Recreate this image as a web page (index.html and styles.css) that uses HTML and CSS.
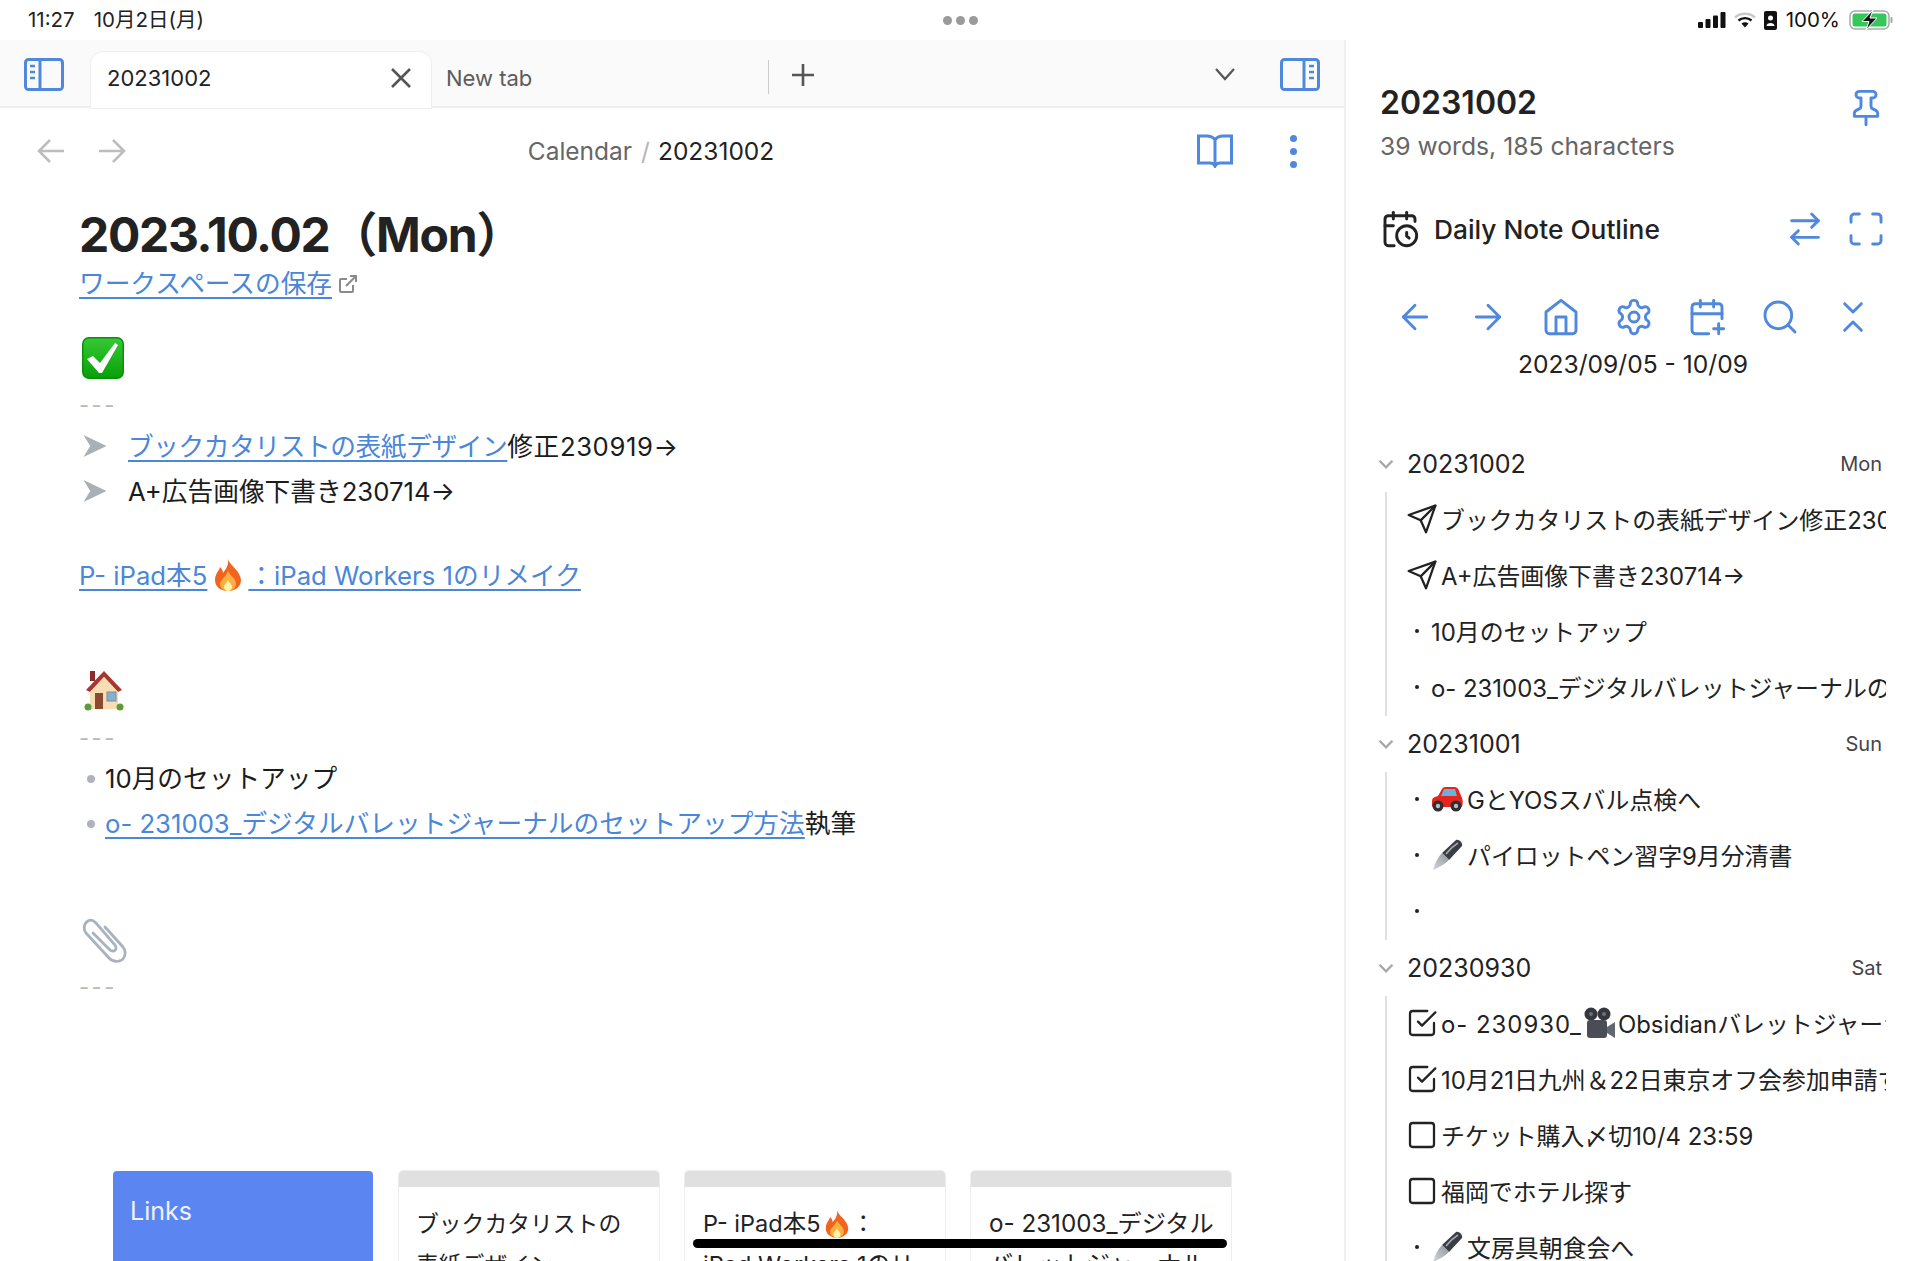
FILE: index.html

```html
<!DOCTYPE html>
<html>
  <head>
    <meta charset="utf-8" />
    <title>20231002</title>
    <link rel="stylesheet" href="styles.css">
  </head>
  <body>
    <!-- SHARED ICONS -->
    <svg class="defs" width="0" height="0">
      <defs>
        <linearGradient id="gCheck" x1="0" y1="0" x2="0" y2="1"><stop offset="0" stop-color="#35c935"/><stop offset="1" stop-color="#08a008"/></linearGradient>
        <linearGradient id="gNib" x1="0" y1="1" x2="1" y2="0"><stop offset="0" stop-color="#d5d8dd"/><stop offset="1" stop-color="#8e939b"/></linearGradient>
      </defs>
      <symbol id="iSend" viewBox="0 0 24 24"><path d="m22 2-7 20-4-9-9-4Z"/><path d="M22 2 11 13"/></symbol>
      <symbol id="iChecked" viewBox="0 0 24 24"><path d="m9 11 3 3L22 4"/><path d="M21 12v7a2 2 0 0 1-2 2H5a2 2 0 0 1-2-2V5a2 2 0 0 1 2-2h11"/></symbol>
      <symbol id="iBox" viewBox="0 0 24 24"><rect x="3" y="3" width="18" height="18" rx="2"/></symbol>
      <symbol id="iChevron" viewBox="0 0 24 24"><path d="m6 9 6 6 6-6"/></symbol>
      <symbol id="iPen" viewBox="0 0 32 32">
        <path d="M25 1C28 0 32 4 31 7L18 21 11 14Z" fill="#3a3d44"/>
        <path d="M27 4C22 7 18 11 15 15" fill="none" stroke="#a4a8af" stroke-width="1.5"/>
        <path d="M11 14 18 21C13 26 8 28 2 31 4 25 6 19 11 14Z" fill="url(#gNib)"/>
      </symbol>
      <symbol id="iMarker" viewBox="0 0 24 24"><path d="M0 0 24 11.5 0 23 7 11.5Z" fill="#abafb6"/></symbol>
    </svg>

    <!-- STATUS BAR -->
    <div class="statusBar">
      <div class="statusTime"><span>11:27</span><span>10月2日(月)</span></div>
      <div class="statusDots"><i></i><i></i><i></i></div>
      <div class="statusIcons">
        <svg width="28" height="16" viewBox="0 0 28 16"><rect x="0" y="10" width="5" height="6" rx="1"/><rect x="7.5" y="7" width="5" height="9" rx="1"/><rect x="15" y="3.5" width="5" height="12.5" rx="1"/><rect x="22.5" y="0" width="5" height="16" rx="1"/></svg>
        <svg class="wifiIcon" width="22" height="16" viewBox="0 0 22 16"><path d="M1 5.5C6.5 .5 15.5 .5 21 5.5" fill="none" stroke="#c9c9c9" stroke-width="2.4"/><path d="M4.5 8.5C8 5.3 14 5.3 17.5 8.5" fill="none" stroke="#111" stroke-width="2.4"/><path d="M7.5 11.5 11 15.5 14.5 11.5C12.5 9.8 9.5 9.8 7.5 11.5Z" fill="#111"/></svg>
        <svg class="lockIcon" width="13" height="19" viewBox="0 0 13 19"><rect x="0" y="0" width="13" height="19" rx="2" fill="#111"/><circle cx="6.5" cy="7" r="2.5" fill="#fff"/><path d="M2.5 15C2.5 11 10.5 11 10.5 15Z" fill="#fff"/></svg>
        <span class="statusPct">100%</span>
        <svg width="44" height="20" viewBox="0 0 44 20"><rect x="1" y="1" width="39" height="18" rx="5" fill="none" stroke="#a9a9a9" stroke-width="1.5"/><rect x="3.5" y="3.5" width="34" height="13" rx="2.5" fill="#34c759"/><rect x="41.5" y="7" width="2" height="6" rx="1" fill="#a9a9a9"/><path d="M24 0 13 11.5h7L17 20l11-12h-7Z" fill="#111" stroke="#fff" stroke-width="1"/></svg>
      </div>
    </div>

    <div class="app">
      <!-- MAIN PANE -->
      <div class="mainPane">
        <div class="tabBar">
          <svg class="sideToggle" width="40" height="33" viewBox="0 0 40 33"><rect x="1.5" y="1.5" width="37" height="30" rx="3"/><path d="M16 1.5v30"/><path class="thin" d="M6 8h5M6 14h5M6 20h5"/></svg>
          <div class="tab tabActive">
            <span>20231002</span>
            <svg class="closeIcon" width="24" height="24" viewBox="0 0 24 24"><path d="M3 3 21 21M21 3 3 21"/></svg>
          </div>
          <div class="tab">
            <span>New tab</span>
          </div>
          <div class="tabDivider"></div>
          <svg class="plusIcon" width="26" height="26" viewBox="0 0 26 26"><path d="M13 2v22M2 13h22"/></svg>
          <svg class="tabMenu" width="24" height="24" viewBox="0 0 24 24"><path d="m3 7 9 10 9-10"/></svg>
          <svg class="sideToggle sideRight" width="40" height="33" viewBox="0 0 40 33"><rect x="1.5" y="1.5" width="37" height="30" rx="3"/><path d="M24 1.5v30"/><path class="thin" d="M29 8h5M29 14h5M29 20h5"/></svg>
        </div>

        <div class="viewHeader">
          <div class="viewNav">
            <svg class="navArrow" width="28" height="26" viewBox="0 0 28 26"><path d="M13 2 2 13l11 11M2 13h25"/></svg>
            <svg class="navArrow" width="28" height="26" viewBox="0 0 28 26"><path d="m15 2 11 11-11 11M26 13H1"/></svg>
          </div>
          <div class="crumbs"><span class="crumbParent">Calendar</span><span class="crumbSep">/</span><span>20231002</span></div>
          <div class="viewActions">
            <svg class="bookIcon" width="36" height="34" viewBox="0 0 36 34"><path d="M18 6C16 3 13 2 10 2H1.5v27H13c2.5 0 4 1 5 3 1-2 2.5-3 5-3h11.5V2H26c-3 0-6 1-8 4Zm0 0v25"/></svg>
            <div class="moreDots"><i></i><i></i><i></i></div>
          </div>
        </div>

        <div class="noteBody">
          <h1 class="noteTitle">2023.10.02（Mon）</h1>
          <div class="linkLine">
            <a class="noteLink">ワークスペースの保存</a>
            <svg class="extIcon" width="20" height="20" viewBox="0 0 20 20"><path d="M15 11v6a1 1 0 0 1-1 1H3a1 1 0 0 1-1-1V6a1 1 0 0 1 1-1h6M12 2h6v6M18 2 8 12"/></svg>
          </div>

          <div class="emojiLine checkLine">
            <svg width="44" height="44" viewBox="0 0 44 44"><rect x="1" y="1" width="42" height="42" rx="7" fill="#0b8f0b"/><rect x="2.5" y="2.5" width="39" height="39" rx="5.5" fill="url(#gCheck)"/><path d="M6 23 12 20 19 27 34 7 37 9 21 37 18 37Z" fill="#fff"/></svg>
          </div>
          <div class="dashes">---</div>
          <div class="listRow"><svg class="marker" width="24" height="23"><use href="#iMarker"/></svg><span><a class="noteLink tightLink">ブックカタリストの表紙デザイン</a><span class="wideText">修正230919→</span></span></div>
          <div class="listRow"><svg class="marker" width="24" height="23"><use href="#iMarker"/></svg><span>A+広告画像下書き230714→</span></div>

          <div class="projectLine"><a class="noteLink">P- iPad本5<svg class="fire" width="30" height="32" viewBox="0 0 30 32"><path d="M15 0C17 7 27 11 28 21 28 28 22 32 15 32 8 32 2 28 2 21 2 15 6 12 7 8 9 10 10 12 10 14 13 10 16 6 15 0Z" fill="#f0641e"/><path d="M15 12C17 17 23 19 23 25 23 29 19 32 15 32 11 32 7 29 7 25 7 21 13 18 15 12Z" fill="#fbb040"/><path d="M15 21C16 24 19 25 19 28 19 30 17 32 15 32 13 32 11 30 11 28 11 25 14 24 15 21Z" fill="#fff3b0"/></svg>：iPad Workers 1のリメイク</a></div>

          <div class="emojiLine houseLine">
            <svg width="42" height="42" viewBox="0 0 42 42">
              <rect x="7" y="2" width="5" height="10" fill="#8e2a2a"/>
              <rect x="7" y="18" width="28" height="22" fill="#f6ddb4"/>
              <path d="M3 21 21 2 39 21 35 23 21 8 7 23Z" fill="#a9352e"/>
              <path d="M21 8 35 23H7Z" fill="#f6ddb4"/>
              <rect x="12" y="24" width="8" height="16" fill="#8b4a30"/>
              <rect x="24" y="23" width="9" height="9" fill="#7fb2d6" stroke="#8a8a8a"/>
              <circle cx="5" cy="38" r="3.5" fill="#5d9c3a"/>
              <circle cx="37" cy="38" r="3.5" fill="#5d9c3a"/>
            </svg>
          </div>
          <div class="dashes">---</div>
          <div class="bulletRow"><i class="bulletDot"></i><span>10月のセットアップ</span></div>
          <div class="bulletRow"><i class="bulletDot"></i><span><a class="noteLink">o- 231003_デジタルバレットジャーナルのセットアップ方法</a>執筆</span></div>

          <div class="emojiLine clipLine">
            <svg class="clipIcon" width="44" height="46" viewBox="0 0 44 46"><path d="M22 9 40 29C44 34 42 42 36 43 32 44 29 43 26 40L3 15C0 11 1 5 5 3 8 1 11 3 13 5L32 27C34 30 33 33 30 33 29 33 28 33 27 32L10 15"/></svg>
          </div>
          <div class="dashes">---</div>

          <div class="cardRow">
            <div class="linkCard headCard">Links</div>
            <div class="linkCard"><div class="cardBar"></div><div class="cardText cardKana">ブックカタリストの<br>表紙デザイン</div></div>
            <div class="linkCard"><div class="cardBar"></div><div class="cardText">P- iPad本5<svg class="fire cardFire" width="26" height="30" viewBox="0 0 30 32"><path d="M15 0C17 7 27 11 28 21 28 28 22 32 15 32 8 32 2 28 2 21 2 15 6 12 7 8 9 10 10 12 10 14 13 10 16 6 15 0Z" fill="#f0641e"/><path d="M15 12C17 17 23 19 23 25 23 29 19 32 15 32 11 32 7 29 7 25 7 21 13 18 15 12Z" fill="#fbb040"/><path d="M15 21C16 24 19 25 19 28 19 30 17 32 15 32 13 32 11 30 11 28 11 25 14 24 15 21Z" fill="#fff3b0"/></svg>：<br>iPad Workers 1のリ</div></div>
            <div class="linkCard"><div class="cardBar"></div><div class="cardText cardWide">o- 231003_デジタル<br>バレットジャーナル</div></div>
          </div>
        </div>
      </div>

      <!-- RIGHT SIDE PANEL -->
      <div class="sidePanel">
        <div class="fileHead">
          <div>
            <div class="fileName">20231002</div>
            <div class="fileStats">39 words, 185 characters</div>
          </div>
          <svg class="blueIcon pinIcon" width="40" height="40" viewBox="0 0 24 24"><path d="M12 17v5"/><path d="M5 17h14v-1.76a2 2 0 0 0-1.11-1.79l-1.78-.9A2 2 0 0 1 15 10.76V6h1a2 2 0 0 0 0-4H8a2 2 0 0 0 0 4h1v4.76a2 2 0 0 1-1.11 1.79l-1.78.9A2 2 0 0 0 5 15.24Z"/></svg>
        </div>

        <div class="outlineHead">
          <svg class="darkIcon" width="40" height="40" viewBox="0 0 24 24"><path d="M21 7.5V6a2 2 0 0 0-2-2H5a2 2 0 0 0-2 2v14a2 2 0 0 0 2 2h3.5"/><path d="M16 2v4"/><path d="M8 2v4"/><path d="M3 10h5"/><path d="M17.5 17.5 16 16.3V14"/><circle cx="16" cy="16" r="6"/></svg>
          <span class="outlineTitle">Daily Note Outline</span>
          <svg class="blueIcon swapIcon" width="40" height="40" viewBox="0 0 24 24"><path d="m16 3 4 4-4 4"/><path d="M20 7H4"/><path d="m8 21-4-4 4-4"/><path d="M4 17h16"/></svg>
          <svg class="blueIcon" width="40" height="40" viewBox="0 0 24 24"><path d="M8 3H5a2 2 0 0 0-2 2v3"/><path d="M21 8V5a2 2 0 0 0-2-2h-3"/><path d="M3 16v3a2 2 0 0 0 2 2h3"/><path d="M16 21h3a2 2 0 0 0 2-2v-3"/></svg>
        </div>

        <div class="outlineNav">
          <svg class="blueIcon" width="40" height="40" viewBox="0 0 24 24"><path d="m12 19-7-7 7-7"/><path d="M19 12H5"/></svg>
          <svg class="blueIcon" width="40" height="40" viewBox="0 0 24 24"><path d="m12 5 7 7-7 7"/><path d="M5 12h14"/></svg>
          <svg class="blueIcon" width="40" height="40" viewBox="0 0 24 24"><path d="m3 9 9-7 9 7v11a2 2 0 0 1-2 2H5a2 2 0 0 1-2-2z"/><path d="M9 22V12h6v10"/></svg>
          <svg class="blueIcon" width="40" height="40" viewBox="0 0 24 24"><path d="M12.22 2h-.44a2 2 0 0 0-2 2v.18a2 2 0 0 1-1 1.73l-.43.25a2 2 0 0 1-2 0l-.15-.08a2 2 0 0 0-2.73.73l-.22.38a2 2 0 0 0 .73 2.73l.15.1a2 2 0 0 1 1 1.72v.51a2 2 0 0 1-1 1.74l-.15.09a2 2 0 0 0-.73 2.73l.22.38a2 2 0 0 0 2.73.73l.15-.08a2 2 0 0 1 2 0l.43.25a2 2 0 0 1 1 1.73V20a2 2 0 0 0 2 2h.44a2 2 0 0 0 2-2v-.18a2 2 0 0 1 1-1.73l.43-.25a2 2 0 0 1 2 0l.15.08a2 2 0 0 0 2.73-.73l.22-.39a2 2 0 0 0-.73-2.73l-.15-.08a2 2 0 0 1-1-1.74v-.5a2 2 0 0 1 1-1.74l.15-.09a2 2 0 0 0 .73-2.73l-.22-.38a2 2 0 0 0-2.73-.73l-.15.08a2 2 0 0 1-2 0l-.43-.25a2 2 0 0 1-1-1.73V4a2 2 0 0 0-2-2z"/><circle cx="12" cy="12" r="3"/></svg>
          <svg class="blueIcon" width="40" height="40" viewBox="0 0 24 24"><path d="M21 13V6a2 2 0 0 0-2-2H5a2 2 0 0 0-2 2v14a2 2 0 0 0 2 2h8"/><path d="M16 2v4"/><path d="M8 2v4"/><path d="M3 10h18"/><path d="M19 16v6"/><path d="M16 19h6"/></svg>
          <svg class="blueIcon" width="40" height="40" viewBox="0 0 24 24"><circle cx="11" cy="11" r="8"/><path d="m21 21-4.3-4.3"/></svg>
          <svg class="blueIcon" width="40" height="40" viewBox="0 0 24 24"><path d="m7 20 5-5 5 5"/><path d="m7 4 5 5 5-5"/></svg>
        </div>
        <div class="dateRange">2023/09/05 - 10/09</div>

        <div class="outlineList">
          <div class="dayHead"><svg class="dayChevron" width="26" height="26"><use href="#iChevron"/></svg><span class="dayName">20231002</span><span class="dayWeek">Mon</span></div>
          <div class="dayItems">
            <div class="dayItem"><svg class="itemIcon" width="32" height="32"><use href="#iSend"/></svg><span>ブックカタリストの表紙デザイン修正230919→</span></div>
            <div class="dayItem"><svg class="itemIcon" width="32" height="32"><use href="#iSend"/></svg><span>A+広告画像下書き230714→</span></div>
            <div class="dayItem"><i class="itemDot"></i><span>10月のセットアップ</span></div>
            <div class="dayItem"><i class="itemDot"></i><span>o- 231003_デジタルバレットジャーナルのセットアップ方法執筆</span></div>
          </div>

          <div class="dayHead"><svg class="dayChevron" width="26" height="26"><use href="#iChevron"/></svg><span class="dayName">20231001</span><span class="dayWeek">Sun</span></div>
          <div class="dayItems">
            <div class="dayItem"><i class="itemDot"></i><svg class="itemEmoji" width="32" height="26" viewBox="0 0 32 26"><path d="M1 20V15C1 12 3 11 7 10L11 3C12 1 14 1 16 1H23C26 1 27 2 28 5L31 12C32 15 32 17 31 21H2Z" fill="#e3241f"/><path d="M13 3 10 10H26L24 3Z" fill="#6cb0d6"/><circle cx="7" cy="20" r="5.5" fill="#2f2f33"/><circle cx="7" cy="20" r="2.2" fill="#b9bcc2"/><circle cx="25" cy="20" r="5.5" fill="#2f2f33"/><circle cx="25" cy="20" r="2.2" fill="#b9bcc2"/></svg><span>GとYOSスバル点検へ</span></div>
            <div class="dayItem"><i class="itemDot"></i><svg class="itemEmoji" width="32" height="32"><use href="#iPen"/></svg><span>パイロットペン習字9月分清書</span></div>
            <div class="dayItem"><i class="itemDot"></i></div>
          </div>

          <div class="dayHead"><svg class="dayChevron" width="26" height="26"><use href="#iChevron"/></svg><span class="dayName">20230930</span><span class="dayWeek">Sat</span></div>
          <div class="dayItems">
            <div class="dayItem"><svg class="itemIcon" width="32" height="32"><use href="#iChecked"/></svg><span><span class="wideLatin">o- 230930_</span><svg class="itemEmoji inlineEmoji" width="32" height="32" viewBox="0 0 32 32"><circle cx="7" cy="7" r="6.5" fill="#34373d"/><circle cx="7" cy="7" r="2" fill="#6d7179"/><circle cx="20" cy="7" r="6.5" fill="#34373d"/><circle cx="20" cy="7" r="2" fill="#6d7179"/><rect x="3" y="13" width="20" height="18" rx="3" fill="#4a4d55"/><path d="M23 20 31 15V31L23 26Z" fill="#62666f"/></svg>Obsidianバレットジャーナルのセットアップ</span></div>
            <div class="dayItem"><svg class="itemIcon" width="32" height="32"><use href="#iChecked"/></svg><span>10月21日九州＆22日東京オフ会参加申請する</span></div>
            <div class="dayItem"><svg class="itemIcon" width="32" height="32"><use href="#iBox"/></svg><span>チケット購入〆切10/4 23:59</span></div>
            <div class="dayItem"><svg class="itemIcon" width="32" height="32"><use href="#iBox"/></svg><span>福岡でホテル探す</span></div>
            <div class="dayItem"><i class="itemDot"></i><svg class="itemEmoji" width="32" height="32"><use href="#iPen"/></svg><span>文房具朝食会へ</span></div>
          </div>
        </div>
      </div>
    </div>

    <!-- HOME INDICATOR -->
    <div class="homeBar"></div>
  </body>
</html>
```

FILE: styles.css

```css
html, body {
  margin: 0;
  width: 1920px;
  height: 1261px;
  overflow: hidden;
  background: #fff;
}
body {
  position: relative;
  font-family: Inter, "Noto Sans CJK JP", sans-serif;
  color: #222;
}
.defs {
  position: absolute;
}

/* status bar */
.statusBar {
  height: 40px;
  display: grid;
  grid-template-columns: 1fr auto 1fr;
  align-items: center;
  padding: 0 27px 0 28px;
  font-size: 20.5px;
  line-height: 24px;
}
.statusTime {
  display: flex;
  align-items: baseline;
  gap: 19px;
}
.statusDots {
  display: flex;
  gap: 4px;
}
.statusDots i {
  width: 9px;
  height: 9px;
  border-radius: 50%;
  background: #9a9a9a;
}
.statusIcons {
  display: flex;
  align-items: center;
  justify-content: flex-end;
  gap: 8px;
  color: #111;
}
.statusIcons svg {
  fill: #111;
}
.statusPct {
  margin: 0 1px;
}

.app {
  display: flex;
  height: 1221px;
}

/* tabs */
.mainPane {
  width: 1344px;
  flex: none;
}
.tabBar {
  height: 68px;
  box-sizing: border-box;
  background: #fafafa;
  border-bottom: 2px solid #eee;
  display: flex;
  align-items: center;
}
.sideToggle {
  margin: 2px 0 0 24px;
  fill: none;
  stroke: #4f88dc;
  stroke-width: 3;
}
.sideToggle .thin {
  stroke-width: 2.6;
}
.tab {
  width: 340px;
  height: 56px;
  margin-top: 10px;
  box-sizing: border-box;
  display: flex;
  align-items: center;
  justify-content: space-between;
  padding: 0 17px;
  font-size: 22px;
  color: #5c5c5c;
}
.tabActive {
  margin: 12px 0 -2px 27px;
  padding: 0 16px 4px;
  background: #fff;
  border-radius: 12px 12px 0 0;
  box-shadow: 0 0 0 1px #eee;
  color: #222;
}
.tabActive + .tab {
  width: 337px;
  padding-left: 15px;
}
.closeIcon {
  margin-right: 2px;
  fill: none;
  stroke: #555;
  stroke-width: 2.6;
}
.tabDivider {
  width: 1px;
  height: 34px;
  margin-top: 8px;
  background: #ccc;
}
.plusIcon {
  margin: 4px 0 0 21px;
  fill: none;
  stroke: #555;
  stroke-width: 2.6;
}
.tabMenu {
  margin: 2px 0 0 auto;
  fill: none;
  stroke: #555;
  stroke-width: 2.2;
}
.tabMenu + .sideRight {
  margin: 2px 24px 0 43px;
}

/* note header */
.viewHeader {
  height: 88px;
  display: grid;
  grid-template-columns: 1fr auto 1fr;
  align-items: center;
  padding: 0 39px 0 37px;
  margin-top: -1px;
}
.viewNav {
  display: flex;
  gap: 33px;
}
.navArrow {
  fill: none;
  stroke: #bdbdbd;
  stroke-width: 2.6;
}
.crumbs {
  font-size: 24.5px;
  margin-right: 40px;
}
.crumbParent {
  color: #666;
}
.crumbSep {
  color: #b5b5b5;
  margin: 0 8px 0 9px;
}
.viewActions {
  display: flex;
  justify-content: flex-end;
  align-items: center;
  gap: 57px;
}
.bookIcon {
  fill: none;
  stroke: #4f88dc;
  stroke-width: 3;
}
.moreDots {
  display: flex;
  flex-direction: column;
  gap: 6px;
  margin-right: 8px;
}
.moreDots i {
  width: 7px;
  height: 7px;
  border-radius: 50%;
  background: #4f88dc;
}

/* note body */
.noteBody {
  padding: 9px 0 0 79px;
  font-size: 25.7px;
  line-height: 45px;
  color: #1c1c1c;
}
.noteTitle {
  margin: 0;
  font-size: 48px;
  line-height: 62px;
  font-weight: 700;
  letter-spacing: -1.3px;
  color: #222;
}
.noteLink {
  color: #4a86d9;
  text-decoration: underline;
  text-underline-offset: 4px;
  text-decoration-thickness: 1.5px;
}
.tightLink {
  letter-spacing: -0.4px;
}
.wideText {
  letter-spacing: 0.6px;
}
.linkLine {
  height: 36px;
  line-height: 36px;
  display: flex;
  align-items: center;
  gap: 6px;
}
.extIcon {
  fill: none;
  stroke: #8a8a8a;
  stroke-width: 2;
}
.emojiLine {
  height: 44px;
  margin-top: 34px;
  display: flex;
}
.checkLine {
  padding-left: 2px;
}
.houseLine {
  margin-top: 71px;
  padding-left: 4px;
}
.clipLine {
  margin-top: 72px;
  padding-left: 4px;
}
.clipIcon {
  overflow: visible;
  fill: none;
  stroke: #a9b3c0;
  stroke-width: 2.8;
  stroke-linecap: round;
}
.dashes {
  height: 30px;
  line-height: 30px;
  margin-top: 10px;
  font-size: 22px;
  letter-spacing: 2.5px;
  color: #b9b9b9;
}
.listRow {
  height: 45px;
  display: flex;
  align-items: center;
  gap: 21px;
  padding-left: 4px;
  white-space: nowrap;
}
.dashes + .listRow {
  margin-top: 4px;
}
.marker {
  flex: none;
}
.projectLine {
  height: 45px;
  margin-top: 39px;
}
.fire {
  vertical-align: -6px;
  margin: 0 5px 0 6px;
}
.bulletRow {
  height: 45px;
  display: flex;
  align-items: center;
  white-space: nowrap;
  padding-left: 1px;
}
.dashes + .bulletRow {
  margin-top: 3px;
}
.bulletDot {
  width: 8px;
  height: 8px;
  border-radius: 50%;
  background: #b0b3b8;
  margin: 0 10px 0 7px;
  flex: none;
}

/* link cards */
.cardRow {
  display: flex;
  gap: 26px;
  margin: 169px 0 0 34px;
}
.linkCard {
  width: 260px;
  height: 200px;
  flex: none;
  box-sizing: border-box;
  background: #fff;
  border-radius: 4px 4px 0 0;
  box-shadow: 0 0 0 1px #eee;
  font-size: 23.5px;
  line-height: 41px;
  color: #222;
}
.headCard {
  padding: 20px 17px;
  background: #5b85f0;
  box-shadow: none;
  font-size: 25px;
  color: #eef2fd;
}
.cardBar {
  height: 16px;
  background: #e0e0e0;
  border-radius: 4px 4px 0 0;
}
.cardText {
  padding: 16px 18px 0;
  white-space: nowrap;
}
.cardKana {
  font-size: 22.8px;
  padding-left: 17px;
}
.cardWide {
  font-size: 24.2px;
}
.cardFire {
  vertical-align: -7px;
  margin: 0 1px 0 4px;
}

/* side panel */
.sidePanel {
  flex: 1;
  min-width: 0;
  border-left: 2px solid #f0f0f0;
  padding: 0 34px;
}
.fileHead {
  display: flex;
  justify-content: space-between;
  padding-top: 43px;
  margin-bottom: 1px;
}
.fileName {
  font-size: 32px;
  line-height: 40px;
  font-weight: 600;
  color: #222;
}
.fileStats {
  font-size: 24.7px;
  line-height: 46px;
  color: #666;
}
.pinIcon {
  margin-top: 5px;
}
.blueIcon {
  flex: none;
  fill: none;
  stroke: #4f88dc;
  stroke-width: 1.75;
  stroke-linecap: round;
  stroke-linejoin: round;
}
.darkIcon {
  flex: none;
  fill: none;
  stroke: #222;
  stroke-width: 1.75;
  stroke-linecap: round;
  stroke-linejoin: round;
}
.outlineHead {
  display: flex;
  align-items: center;
  margin-top: 40px;
  height: 40px;
}
.outlineTitle {
  margin-left: 14px;
  font-size: 26.3px;
  font-weight: 500;
  color: #222;
}
.swapIcon {
  margin: 0 21px 0 auto;
}
.outlineNav {
  display: flex;
  gap: 33px;
  margin-top: 48px;
  padding-left: 15px;
}
.dateRange {
  margin-top: 9px;
  line-height: 36px;
  text-align: center;
  font-size: 24.6px;
  color: #222;
}

/* outline list */
.outlineList {
  margin-top: 54px;
  font-size: 23.9px;
}
.dayHead {
  height: 56px;
  display: flex;
  align-items: center;
}
.dayChevron {
  margin: 0 8px 0 -7px;
  fill: none;
  stroke: #a8a8a8;
  stroke-width: 2.2;
  flex: none;
}
.dayName {
  font-size: 25px;
}
.dayWeek {
  margin-left: auto;
  margin-right: 4px;
  font-size: 20px;
  color: #444;
}
.dayItems {
  margin-left: 5px;
  border-left: 2px solid #e0e0e0;
  padding-left: 19px;
}
.dayItem {
  height: 56px;
  box-sizing: border-box;
  padding-bottom: 2px;
  display: flex;
  align-items: center;
  overflow: hidden;
  white-space: nowrap;
  color: #222;
}
.dayItem > span {
  margin-top: -2px;
}
.wideLatin {
  letter-spacing: 1px;
}
.itemIcon {
  flex: none;
  margin-right: 3px;
  fill: none;
  stroke: #222;
  stroke-width: 1.7;
  stroke-linecap: round;
  stroke-linejoin: round;
}
.itemDot {
  flex: none;
  width: 4px;
  height: 4px;
  border-radius: 50%;
  background: #222;
  margin: 0 12px 0 9px;
}
.itemEmoji {
  flex: none;
  margin-right: 4px;
}
.inlineEmoji {
  margin: 0 2px 0 2px;
  vertical-align: -6px;
}

.homeBar {
  position: absolute;
  left: 693px;
  top: 1239px;
  width: 534px;
  height: 9px;
  border-radius: 5px;
  background: #000;
}
```
